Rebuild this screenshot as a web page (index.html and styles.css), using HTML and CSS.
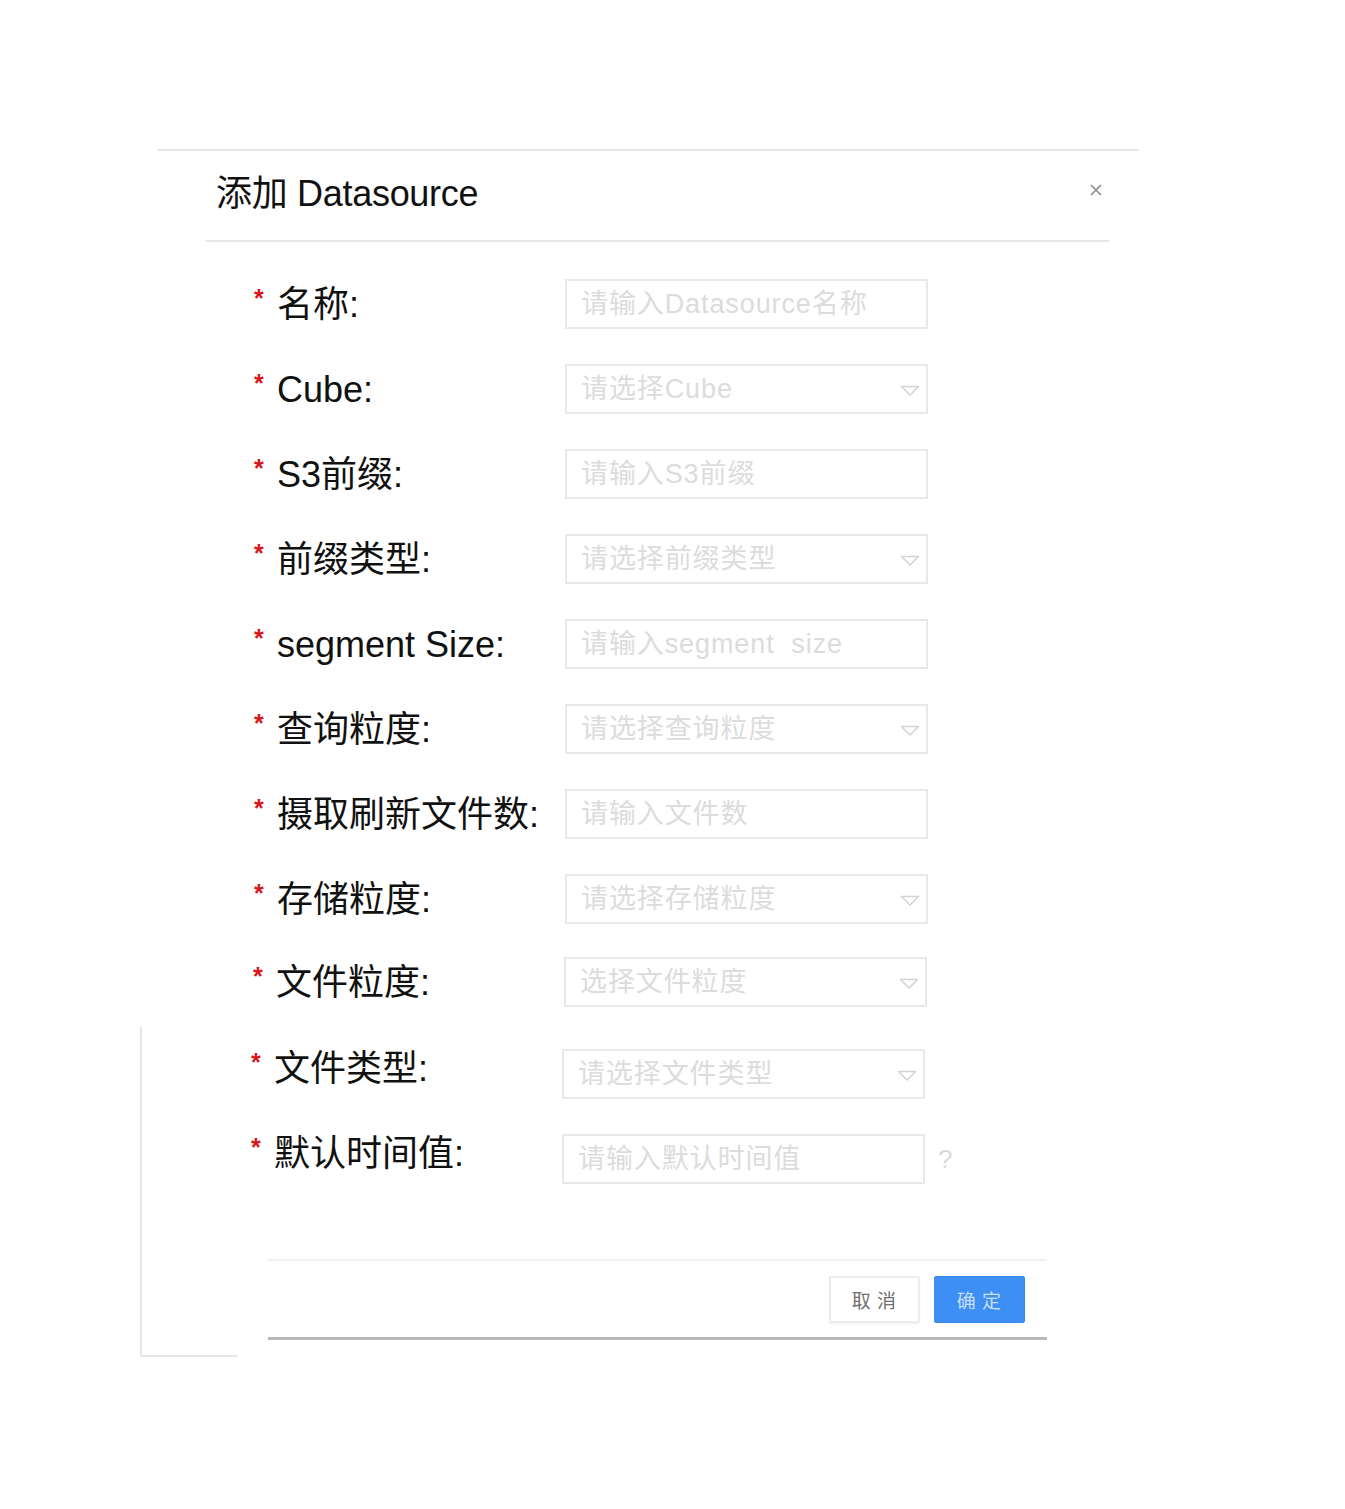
FILE: index.html
```html
<!DOCTYPE html>
<html lang="zh-CN">
<head>
<meta charset="utf-8">
<title>添加 Datasource</title>
<link rel="stylesheet" href="styles.css">
</head>
<body>
<div class="page">
  <div class="ghost-frame"></div>
  <div class="top-rule"></div>
  <div class="header">
    <h1 class="title">添加 Datasource</h1>
    <svg class="close" width="14" height="14" viewBox="0 0 14 14"><path d="M2 2 L12 12 M12 2 L2 12" stroke="#8a8a8a" stroke-width="1.6" fill="none"/></svg>
  </div>

  <div class="form">
    <div class="row">
      <div class="label"><span class="req">*</span><span class="text">名称:</span></div>
      <div class="field">请输入Datasource名称</div>
    </div>
    <div class="row">
      <div class="label"><span class="req">*</span><span class="text">Cube:</span></div>
      <div class="field select">请选择Cube<svg class="caret" width="20" height="12" viewBox="0 0 20 12"><path d="M1.5 1.5 H18.5 L10 10 Z" fill="none" stroke="#d4d4d4" stroke-width="1.6" stroke-linejoin="round"/></svg></div>
    </div>
    <div class="row">
      <div class="label"><span class="req">*</span><span class="text">S3前缀:</span></div>
      <div class="field">请输入S3前缀</div>
    </div>
    <div class="row">
      <div class="label"><span class="req">*</span><span class="text">前缀类型:</span></div>
      <div class="field select">请选择前缀类型<svg class="caret" width="20" height="12" viewBox="0 0 20 12"><path d="M1.5 1.5 H18.5 L10 10 Z" fill="none" stroke="#d4d4d4" stroke-width="1.6" stroke-linejoin="round"/></svg></div>
    </div>
    <div class="row">
      <div class="label"><span class="req">*</span><span class="text">segment Size:</span></div>
      <div class="field">请输入segment&nbsp; size</div>
    </div>
    <div class="row">
      <div class="label"><span class="req">*</span><span class="text">查询粒度:</span></div>
      <div class="field select">请选择查询粒度<svg class="caret" width="20" height="12" viewBox="0 0 20 12"><path d="M1.5 1.5 H18.5 L10 10 Z" fill="none" stroke="#d4d4d4" stroke-width="1.6" stroke-linejoin="round"/></svg></div>
    </div>
    <div class="row">
      <div class="label"><span class="req">*</span><span class="text">摄取刷新文件数:</span></div>
      <div class="field">请输入文件数</div>
    </div>
    <div class="row">
      <div class="label"><span class="req">*</span><span class="text">存储粒度:</span></div>
      <div class="field select">请选择存储粒度<svg class="caret" width="20" height="12" viewBox="0 0 20 12"><path d="M1.5 1.5 H18.5 L10 10 Z" fill="none" stroke="#d4d4d4" stroke-width="1.6" stroke-linejoin="round"/></svg></div>
    </div>
    <div class="row row-9">
      <div class="label"><span class="req">*</span><span class="text">文件粒度:</span></div>
      <div class="field select">选择文件粒度<svg class="caret" width="20" height="12" viewBox="0 0 20 12"><path d="M1.5 1.5 H18.5 L10 10 Z" fill="none" stroke="#d4d4d4" stroke-width="1.6" stroke-linejoin="round"/></svg></div>
    </div>
    <div class="row row-10">
      <div class="label label-lift"><span class="req">*</span><span class="text">文件类型:</span></div>
      <div class="field select">请选择文件类型<svg class="caret" width="20" height="12" viewBox="0 0 20 12"><path d="M1.5 1.5 H18.5 L10 10 Z" fill="none" stroke="#d4d4d4" stroke-width="1.6" stroke-linejoin="round"/></svg></div>
    </div>
    <div class="row row-11">
      <div class="label label-lift"><span class="req">*</span><span class="text">默认时间值:</span></div>
      <div class="field">请输入默认时间值</div>
      <span class="help">?</span>
    </div>
  </div>

  <div class="footer">
    <button class="btn btn-cancel">取 消</button>
    <button class="btn btn-ok">确 定</button>
  </div>
</div>
</body>
</html>
```

FILE: styles.css
```css
* { box-sizing: border-box; }

html, body {
  margin: 0;
  padding: 0;
  background: #ffffff;
}

body {
  font-family: "Liberation Sans", "Noto Sans CJK SC", sans-serif;
  color: #111;
}

.page {
  position: relative;
  width: 1345px;
  height: 1509px;
  padding-top: 149px;
  overflow: hidden;
}

/* fragment of a window behind the dialog */
.ghost-frame {
  position: absolute;
  left: 140px;
  top: 1027px;
  width: 97px;
  height: 330px;
  border-left: 2px solid #e6e6e6;
  border-bottom: 2px solid #e6e6e6;
}

.top-rule {
  margin-left: 158px;
  width: 981px;
  height: 2px;
  background: #e6e6e6;
}

.header {
  margin-left: 206px;
  width: 903px;
  height: 91px;
  border-bottom: 2px solid #e6e6e6;
  padding: 25px 6px 0 10px;
  display: flex;
  align-items: flex-start;
  justify-content: space-between;
}

.title {
  margin: 0;
  font-size: 36px;
  line-height: 36px;
  font-weight: 400;
  color: #111;
  letter-spacing: -0.3px;
}

.close {
  margin-top: 7px;
}

.form {
  margin-left: 253px;
  margin-top: 37px;
}

.row {
  display: flex;
  align-items: center;
  height: 50px;
  margin-bottom: 35px;
}

.row-9 { margin-top: -2px; margin-left: -1px; margin-bottom: 42px; }
.row-10 { margin-left: -3px; }
.row-11 { margin-left: -3px; }

.label {
  width: 312px;
  display: flex;
  align-items: flex-start;
}

.label-lift {
  margin-bottom: 12px;
}

.req {
  width: 24px;
  padding-left: 1px;
  font-size: 25px;
  line-height: 24px;
  font-weight: 700;
  color: #d9161b;
  margin-top: 1px;
}

.text {
  font-size: 36px;
  line-height: 36px;
  color: #111;
  white-space: nowrap;
  padding-top: 2px;
}

.field {
  position: relative;
  width: 363px;
  height: 50px;
  border: 2px solid #e9e9e9;
  padding-left: 14px;
  display: flex;
  align-items: center;
  font-size: 27px;
  line-height: 1;
  letter-spacing: 0.9px;
  color: #dcdcdc;
  white-space: nowrap;
  overflow: hidden;
}

.caret {
  position: absolute;
  right: 6px;
  top: 19px;
}

.help {
  margin-left: 13px;
  font-size: 26px;
  line-height: 1;
  color: #dadada;
}

.footer {
  margin-top: 75px;
  margin-left: 268px;
  width: 779px;
  border-top: 2px solid #f1f1f1;
  border-bottom: 3px solid #b9b9b9;
  padding: 15px 22px 14px 0;
  display: flex;
  justify-content: flex-end;
  gap: 14px;
}

.btn {
  width: 91px;
  height: 47px;
  border-radius: 2px;
  font-family: "Noto Sans CJK SC", "Liberation Sans", sans-serif;
  font-size: 19px;
  letter-spacing: 1px;
  padding: 0;
  cursor: pointer;
}

.btn-cancel {
  background: #ffffff;
  border: 2px solid #ececec;
  color: #6f6f6f;
  box-shadow: 0 1px 2px rgba(0,0,0,0.06);
}

.btn-ok {
  background: #3d8ff3;
  border: 1px solid #3a8aee;
  color: rgba(255,255,255,0.72);
}
```
